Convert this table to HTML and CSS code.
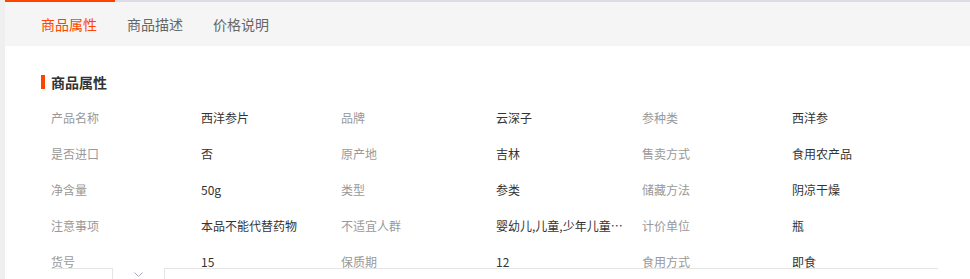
FILE: index.html
```html
<!DOCTYPE html>
<html lang="zh-CN">
<head>
    <meta charset="UTF-8">
    <meta name="viewport" content="width=device-width, initial-scale=1.0">
    <title>商品属性</title>
    <link rel="stylesheet" href="styles.css">
</head>
<body>

<div class="page">
    <div class="tabs">
        <a class="tab active">商品属性</a>
        <a class="tab">商品描述</a>
        <a class="tab">价格说明</a>
    </div>

    <div class="section">
        <h3 class="section-title">商品属性</h3>
        <div class="attrs">
            <span class="label">产品名称</span><span class="value">西洋参片</span>
            <span class="label">品牌</span><span class="value">云深子</span>
            <span class="label">参种类</span><span class="value">西洋参</span>

            <span class="label">是否进口</span><span class="value">否</span>
            <span class="label">原产地</span><span class="value">吉林</span>
            <span class="label">售卖方式</span><span class="value">食用农产品</span>

            <span class="label">净含量</span><span class="value">50g</span>
            <span class="label">类型</span><span class="value">参类</span>
            <span class="label">储藏方法</span><span class="value">阴凉干燥</span>

            <span class="label">注意事项</span><span class="value">本品不能代替药物</span>
            <span class="label">不适宜人群</span><span class="value">婴幼儿,儿童,少年儿童,孕妇,哺乳期妇女</span>
            <span class="label">计价单位</span><span class="value">瓶</span>

            <span class="label">货号</span><span class="value">15</span>
            <span class="label">保质期</span><span class="value">12</span>
            <span class="label">食用方式</span><span class="value">即食</span>
        </div>
    </div>

    <div class="bottom-bar">
        <div class="bar-left"></div>
        <div class="bar-toggle">
            <svg width="9" height="5" viewBox="0 0 9 5"><polyline points="0.5,0.5 4.5,4.5 8.5,0.5" fill="none" stroke="#a9a9b8" stroke-width="1"/></svg>
        </div>
        <div class="bar-right"></div>
    </div>
</div>

</body>
</html>
```

FILE: styles.css
```css
body {
    margin: 0;
    background-color: #efefef;
    font-family: "Noto Sans CJK SC", "Microsoft YaHei", sans-serif;
    overflow: hidden;
}

.page {
    position: relative;
    margin-left: 5px;
    min-height: 100vh;
    background-color: #fff;
}

/* tab strip */
.tabs {
    display: flex;
    height: 44px;
    background-color: #f5f5f5;
    border-top: 2px solid #dddbe8;
}

.tab {
    padding: 0 15px;
    font-size: 14px;
    line-height: 44px;
    color: #666;
    cursor: pointer;
}

.tab:first-child {
    padding: 0 18px 0 36px;
}

.tab:nth-child(2) {
    padding-left: 12px;
}

.tab.active {
    color: #ff4400;
    margin-top: -2px;
    border-top: 2px solid #ff4400;
}

/* attribute list */
.section {
    padding: 26px 0 0 36px;
}

.section-title {
    display: flex;
    align-items: center;
    gap: 6px;
    margin: 0 0 8px;
    font-size: 14px;
    line-height: 20px;
    font-weight: bold;
    color: #333;
}

.section-title::before {
    content: "";
    width: 4px;
    height: 14px;
    background-color: #ff4400;
}

.attrs {
    display: grid;
    grid-template-columns: 150px 140px 155px 146px 150px 1fr;
    grid-auto-rows: 36px;
    padding-left: 10px;
    font-size: 12px;
}

.label,
.value {
    line-height: 36px;
    white-space: nowrap;
    overflow: hidden;
    text-overflow: ellipsis;
    padding-right: 17px;
}

.label {
    color: #999;
}

.value {
    color: #333;
}

.bottom-bar {
    position: absolute;
    top: 268px;
    left: 46px;
    width: 887px;
    height: 20px;
    display: flex;
    background-color: #fff;
}

.bar-left {
    width: 61px;
    border-top: 1px solid #e5e5e5;
    border-right: 1px solid #e5e5e5;
}

.bar-toggle {
    width: 51px;
    display: flex;
    justify-content: center;
    padding-top: 4px;
}

.bar-toggle svg {
    display: block;
}

.bar-right {
    flex: 1;
    border-top: 1px solid #e5e5e5;
    border-left: 1px solid #e5e5e5;
}
```
